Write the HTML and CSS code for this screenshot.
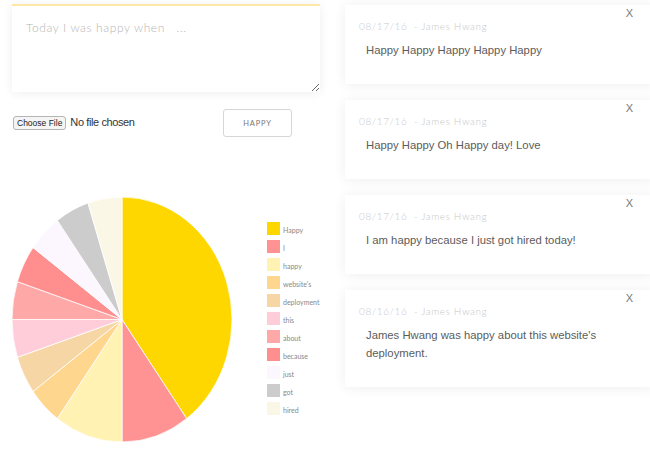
FILE: index.html
```html
<!DOCTYPE html>
<html lang="en">
<head>
<meta charset="utf-8">
<title>Happy</title>
<link rel="stylesheet" href="styles.css">
</head>
<body>
<div class="page">
  <section class="left">
    <textarea class="entry" placeholder="Today I was happy when   ..."></textarea>
    <div class="actions">
      <input class="file" type="file">
      <button class="happy-btn" type="button">HAPPY</button>
    </div>
    <div class="chart">
      <svg class="pie" viewBox="-1 -1 2 2" preserveAspectRatio="none" width="220" height="245">
        <g stroke="#fff" stroke-width="0.8" vector-effect="non-scaling-stroke">
          <path vector-effect="non-scaling-stroke" fill="#FFD700" d="M0 0 L0 -1 A1 1 0 0 1 0.587785 0.809017 Z"/>
          <path vector-effect="non-scaling-stroke" fill="#FF9393" d="M0 0 L0.587785 0.809017 A1 1 0 0 1 0 1 Z"/>
          <path vector-effect="non-scaling-stroke" fill="#FFF2B2" d="M0 0 L0 1 A1 1 0 0 1 -0.587785 0.809017 Z"/>
          <path vector-effect="non-scaling-stroke" fill="#FFD68E" d="M0 0 L-0.587785 0.809017 A1 1 0 0 1 -0.809017 0.587785 Z"/>
          <path vector-effect="non-scaling-stroke" fill="#F7D6A5" d="M0 0 L-0.809017 0.587785 A1 1 0 0 1 -0.951057 0.309017 Z"/>
          <path vector-effect="non-scaling-stroke" fill="#FFCCDA" d="M0 0 L-0.951057 0.309017 A1 1 0 0 1 -1 0 Z"/>
          <path vector-effect="non-scaling-stroke" fill="#FFA8A8" d="M0 0 L-1 0 A1 1 0 0 1 -0.951057 -0.309017 Z"/>
          <path vector-effect="non-scaling-stroke" fill="#FF8F8F" d="M0 0 L-0.951057 -0.309017 A1 1 0 0 1 -0.809017 -0.587785 Z"/>
          <path vector-effect="non-scaling-stroke" fill="#FCF6FF" d="M0 0 L-0.809017 -0.587785 A1 1 0 0 1 -0.587785 -0.809017 Z"/>
          <path vector-effect="non-scaling-stroke" fill="#CCCCCC" d="M0 0 L-0.587785 -0.809017 A1 1 0 0 1 -0.309017 -0.951057 Z"/>
          <path vector-effect="non-scaling-stroke" fill="#FBF7E7" d="M0 0 L-0.309017 -0.951057 A1 1 0 0 1 0 -1 Z"/>
        </g>
      </svg>
      <ul class="legend">
        <li><span class="sw c1"></span><span class="lb">Happy</span></li>
        <li><span class="sw c2"></span><span class="lb">I</span></li>
        <li><span class="sw c3"></span><span class="lb">happy</span></li>
        <li><span class="sw c4"></span><span class="lb">website's</span></li>
        <li><span class="sw c5"></span><span class="lb">deployment</span></li>
        <li><span class="sw c6"></span><span class="lb">this</span></li>
        <li><span class="sw c7"></span><span class="lb">about</span></li>
        <li><span class="sw c8"></span><span class="lb">because</span></li>
        <li><span class="sw c9"></span><span class="lb">just</span></li>
        <li><span class="sw c10"></span><span class="lb">got</span></li>
        <li><span class="sw c11"></span><span class="lb">hired</span></li>
      </ul>
    </div>
  </section>
  <section class="right">
    <article class="card">
      <span class="close">X</span>
      <div class="meta">08/17/16 &nbsp;- James Hwang</div>
      <p class="body">Happy Happy Happy Happy Happy</p>
    </article>
    <article class="card">
      <span class="close">X</span>
      <div class="meta">08/17/16 &nbsp;- James Hwang</div>
      <p class="body">Happy Happy Oh Happy day! Love</p>
    </article>
    <article class="card">
      <span class="close">X</span>
      <div class="meta">08/17/16 &nbsp;- James Hwang</div>
      <p class="body">I am happy because I just got hired today!</p>
    </article>
    <article class="card">
      <span class="close">X</span>
      <div class="meta">08/16/16 &nbsp;- James Hwang</div>
      <p class="body">James Hwang was happy about this website's deployment.</p>
    </article>
  </section>
</div>
</body>
</html>
```
FILE: styles.css
```css
html, body {
  margin: 0;
  padding: 0;
  background: #fff;
  overflow: hidden;
}
body {
  font-family: "Liberation Sans", Arial, sans-serif;
  color: #555;
}
.page {
  display: flex;
  align-items: flex-start;
  width: 650px;
}
.left {
  width: 308px;
  padding: 4px 0 0 12px;
  flex: none;
}
.entry {
  display: block;
  box-sizing: border-box;
  width: 308px;
  height: 88px;
  margin: 0;
  border: none;
  border-top: 2px solid #FDE8A8;
  padding: 14px 14px;
  box-shadow: 0 1px 10px rgba(0, 0, 0, 0.07);
  font-family: Lato, "Open Sans", sans-serif;
  font-weight: 300;
  font-size: 12px;
  line-height: 16px;
  letter-spacing: 0.6px;
  color: #555;
  outline: none;
  background: #fff;
}
.entry::placeholder {
  color: #b5b5b5;
}
.actions {
  display: flex;
  align-items: center;
  justify-content: space-between;
  margin-top: 17px;
  padding: 0 28px 0 1px;
  height: 28px;
}
.file {
  width: 150px;
  font-family: "Liberation Sans", Arial, sans-serif;
  font-size: 11px;
  letter-spacing: -0.4px;
  color: #333;
}
.file::file-selector-button {
  font-family: "Liberation Sans", Arial, sans-serif;
  font-size: 8.5px;
  letter-spacing: 0;
  height: 14px;
  padding: 0 3px;
  margin-right: 4px;
  border: 1px solid #b5b5b5;
  border-radius: 3px;
  background: #f5f5f5;
  color: #222;
}
.happy-btn {
  box-sizing: border-box;
  width: 69px;
  height: 28px;
  border: 1px solid #d6d6d6;
  border-radius: 3px;
  background: #fff;
  font-family: Lato, "Open Sans", sans-serif;
  font-size: 7.5px;
  letter-spacing: 0.8px;
  color: #777;
  padding: 0;
}
.chart {
  display: flex;
  align-items: flex-start;
  margin-top: 60px;
}
.pie {
  display: block;
  flex: none;
}
.legend {
  list-style: none;
  margin: 25px 0 0 35px;
  padding: 0;
  display: flex;
  flex-direction: column;
  gap: 5px;
}
.legend li {
  display: flex;
  align-items: center;
  height: 13px;
}
.sw {
  width: 13px;
  height: 13px;
  margin-right: 3px;
  flex: none;
}
.lb {
  font-family: Lato, "Open Sans", sans-serif;
  font-size: 7px;
  color: #888;
  padding-top: 3px;
}
.c1 { background: #FFD700; }
.c2 { background: #FF9393; }
.c3 { background: #FFF2B2; }
.c4 { background: #FFD68E; }
.c5 { background: #F7D6A5; }
.c6 { background: #FFCCDA; }
.c7 { background: #FFA8A8; }
.c8 { background: #FF8F8F; }
.c9 { background: #FCF6FF; }
.c10 { background: #CCCCCC; }
.c11 { background: #FBF7E7; }

.right {
  flex: none;
  margin-left: 25px;
  padding-top: 5px;
  display: flex;
  flex-direction: column;
  gap: 16px;
}
.card {
  position: relative;
  box-sizing: border-box;
  width: 310px;
  padding: 15px 30px 25px 14px;
  background: #fff;
  box-shadow: 0 1px 12px rgba(0, 0, 0, 0.07);
}
.close {
  position: absolute;
  top: 3px;
  right: 22px;
  font-family: "Liberation Sans", Arial, sans-serif;
  font-size: 11px;
  line-height: 11px;
  color: #777;
}
.meta {
  font-family: Lato, "Open Sans", sans-serif;
  font-weight: 300;
  font-size: 10px;
  line-height: 12px;
  letter-spacing: 0.6px;
  color: #c8c8c8;
}
.body {
  margin: 9px 0 0 0;
  padding-left: 7px;
  font-family: "Liberation Sans", Arial, sans-serif;
  font-size: 11.3px;
  line-height: 18px;
  color: #5c5c5c;
}
```
